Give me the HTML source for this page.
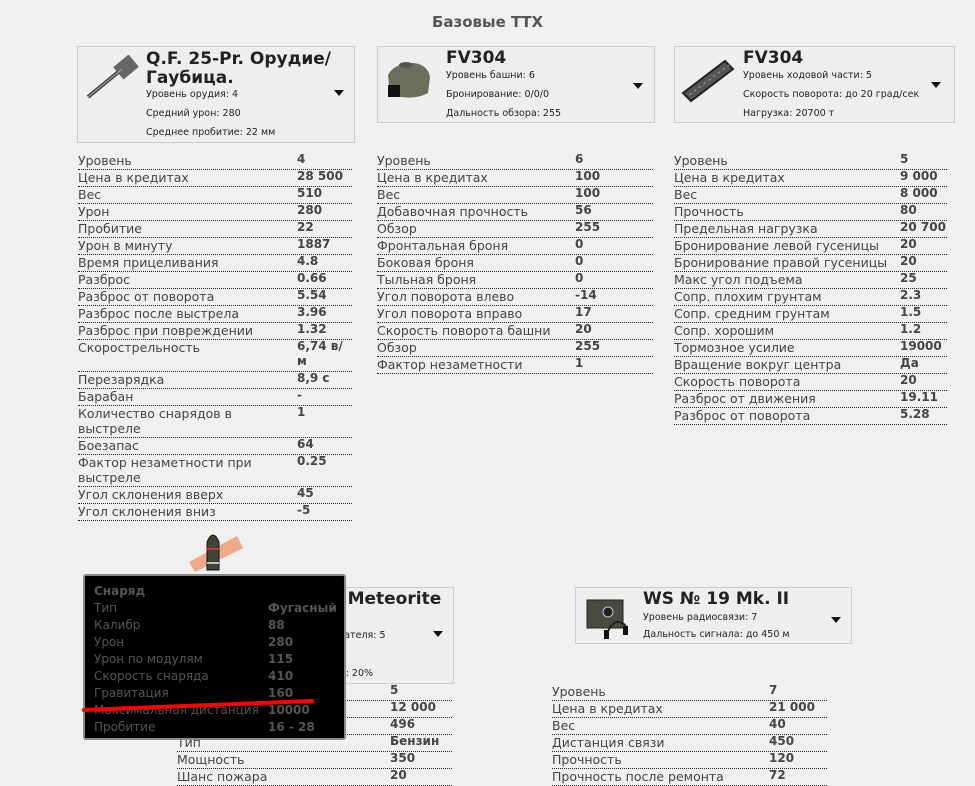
<!DOCTYPE html>
<html><head><meta charset="utf-8">
<style>
body{margin:0;width:975px;height:777px;background:#f0f0f0;overflow:hidden;position:relative;font-family:"DejaVu Sans","Liberation Sans",sans-serif;color:#444}
.h{position:absolute;left:0;width:975px;top:13px;text-align:center;font-size:15px;font-weight:bold;color:#555}
.card{position:absolute;border:1px solid #ccc;background:#eee;box-sizing:border-box}
.card .t{position:absolute;font-weight:bold;font-size:17px;color:#222;line-height:19px}
.card .s{position:absolute;font-size:9.5px;color:#222;white-space:nowrap}
.arr{position:absolute;width:0;height:0;border-left:5px solid transparent;border-right:5px solid transparent;border-top:6px solid #111}
.tb{position:absolute}
.r{position:relative;border-bottom:1px dotted #222;font-size:12.5px;line-height:15px;padding:1px 0 0 0;height:15px}
.r.d{height:30px}
.r .l{position:absolute;left:0;top:0px;line-height:15px}
.r .v{position:absolute;top:-1px;font-weight:bold;font-size:12px;color:#444}
.tip{position:absolute;left:83px;top:574px;width:263px;height:166px;background:#000;border:2px solid #888;box-sizing:border-box;border-radius:3px;font-size:12px;color:#555}
.tip div{position:absolute;left:9px;white-space:nowrap}
.tip span{position:absolute;left:174px;font-weight:bold}
</style></head><body>
<div class="h">Базовые ТТХ</div>

<div class="card" style="left:77px;top:46px;width:278px;height:97px">
 <svg style="position:absolute;left:4px;top:8px" width="60" height="50"><path d="M6 42 L40 14" stroke="#444" stroke-width="4"/><rect x="34" y="4" width="20" height="16" fill="#666" transform="rotate(-40 44 12)"/><path d="M6 42 L40 14" stroke="#aaa" stroke-width="1"/></svg>
 <div class="t" style="left:68px;top:3px">Q.F. 25-Pr. Орудие/<br>Гаубица.</div>
 <div class="s" style="left:68px;top:42px">Уровень орудия: 4</div>
 <div class="s" style="left:68px;top:61px">Средний урон: 280</div>
 <div class="s" style="left:68px;top:80px">Среднее пробитие: 22 мм</div>
 <div class="arr" style="left:256px;top:43px"></div>
</div>
<div class="card" style="left:377px;top:46px;width:278px;height:77px">
 <svg style="position:absolute;left:6px;top:8px" width="50" height="48"><path d="M6 40 L4 20 Q10 8 30 8 Q44 10 46 22 L44 38 Q30 46 6 40Z" fill="#6b6e5a"/><rect x="4" y="30" width="12" height="12" fill="#111"/><ellipse cx="22" cy="10" rx="7" ry="3" fill="#555"/></svg>
 <div class="t" style="left:68px;top:2px">FV304</div>
 <div class="s" style="left:68px;top:23px">Уровень башни: 6</div>
 <div class="s" style="left:68px;top:42px">Бронирование: 0/0/0</div>
 <div class="s" style="left:68px;top:61px">Дальность обзора: 255</div>
 <div class="arr" style="left:255px;top:36px"></div>
</div>
<div class="card" style="left:674px;top:46px;width:281px;height:77px">
 <svg style="position:absolute;left:4px;top:8px" width="60" height="50"><path d="M4 38 L46 6 L54 14 L12 46Z" fill="#555" stroke="#222" stroke-width="2"/><path d="M10 40 L50 10" stroke="#999" stroke-width="1" stroke-dasharray="3 3"/></svg>
 <div class="t" style="left:68px;top:2px">FV304</div>
 <div class="s" style="left:68px;top:23px">Уровень ходовой части: 5</div>
 <div class="s" style="left:68px;top:42px">Скорость поворота: до 20 град/сек</div>
 <div class="s" style="left:68px;top:61px">Нагрузка: 20700 т</div>
 <div class="arr" style="left:256px;top:35px"></div>
</div>

<div class="tb" style="left:78px;top:153px;width:274px">
<div class="r"><span class="l">Уровень</span><span class="v" style="left:219px">4</span></div>
<div class="r"><span class="l">Цена в кредитах</span><span class="v" style="left:219px">28 500</span></div>
<div class="r"><span class="l">Вес</span><span class="v" style="left:219px">510</span></div>
<div class="r"><span class="l">Урон</span><span class="v" style="left:219px">280</span></div>
<div class="r"><span class="l">Пробитие</span><span class="v" style="left:219px">22</span></div>
<div class="r"><span class="l">Урон в минуту</span><span class="v" style="left:219px">1887</span></div>
<div class="r"><span class="l">Время прицеливания</span><span class="v" style="left:219px">4.8</span></div>
<div class="r"><span class="l">Разброс</span><span class="v" style="left:219px">0.66</span></div>
<div class="r"><span class="l">Разброс от поворота</span><span class="v" style="left:219px">5.54</span></div>
<div class="r"><span class="l">Разброс после выстрела</span><span class="v" style="left:219px">3.96</span></div>
<div class="r"><span class="l">Разброс при повреждении</span><span class="v" style="left:219px">1.32</span></div>
<div class="r d"><span class="l">Скорострельность</span><span class="v" style="left:219px;line-height:15px">6,74 в/<br>м</span></div>
<div class="r"><span class="l">Перезарядка</span><span class="v" style="left:219px">8,9 с</span></div>
<div class="r"><span class="l">Барабан</span><span class="v" style="left:219px">-</span></div>
<div class="r d"><span class="l">Количество снарядов в<br>выстреле</span><span class="v" style="left:219px">1</span></div>
<div class="r"><span class="l">Боезапас</span><span class="v" style="left:219px">64</span></div>
<div class="r d"><span class="l">Фактор незаметности при<br>выстреле</span><span class="v" style="left:219px">0.25</span></div>
<div class="r"><span class="l">Угол склонения вверх</span><span class="v" style="left:219px">45</span></div>
<div class="r"><span class="l">Угол склонения вниз</span><span class="v" style="left:219px">-5</span></div>
</div>

<div class="tb" style="left:377px;top:153px;width:276px">
<div class="r"><span class="l">Уровень</span><span class="v" style="left:198px">6</span></div>
<div class="r"><span class="l">Цена в кредитах</span><span class="v" style="left:198px">100</span></div>
<div class="r"><span class="l">Вес</span><span class="v" style="left:198px">100</span></div>
<div class="r"><span class="l">Добавочная прочность</span><span class="v" style="left:198px">56</span></div>
<div class="r"><span class="l">Обзор</span><span class="v" style="left:198px">255</span></div>
<div class="r"><span class="l">Фронтальная броня</span><span class="v" style="left:198px">0</span></div>
<div class="r"><span class="l">Боковая броня</span><span class="v" style="left:198px">0</span></div>
<div class="r"><span class="l">Тыльная броня</span><span class="v" style="left:198px">0</span></div>
<div class="r"><span class="l">Угол поворота влево</span><span class="v" style="left:198px">-14</span></div>
<div class="r"><span class="l">Угол поворота вправо</span><span class="v" style="left:198px">17</span></div>
<div class="r"><span class="l">Скорость поворота башни</span><span class="v" style="left:198px">20</span></div>
<div class="r"><span class="l">Обзор</span><span class="v" style="left:198px">255</span></div>
<div class="r"><span class="l">Фактор незаметности</span><span class="v" style="left:198px">1</span></div>
</div>

<div class="tb" style="left:674px;top:153px;width:273px">
<div class="r"><span class="l">Уровень</span><span class="v" style="left:226px">5</span></div>
<div class="r"><span class="l">Цена в кредитах</span><span class="v" style="left:226px">9 000</span></div>
<div class="r"><span class="l">Вес</span><span class="v" style="left:226px">8 000</span></div>
<div class="r"><span class="l">Прочность</span><span class="v" style="left:226px">80</span></div>
<div class="r"><span class="l">Предельная нагрузка</span><span class="v" style="left:226px">20 700</span></div>
<div class="r"><span class="l">Бронирование левой гусеницы</span><span class="v" style="left:226px">20</span></div>
<div class="r"><span class="l">Бронирование правой гусеницы</span><span class="v" style="left:226px">20</span></div>
<div class="r"><span class="l">Макс угол подъема</span><span class="v" style="left:226px">25</span></div>
<div class="r"><span class="l">Сопр. плохим грунтам</span><span class="v" style="left:226px">2.3</span></div>
<div class="r"><span class="l">Сопр. средним грунтам</span><span class="v" style="left:226px">1.5</span></div>
<div class="r"><span class="l">Сопр. хорошим</span><span class="v" style="left:226px">1.2</span></div>
<div class="r"><span class="l">Тормозное усилие</span><span class="v" style="left:226px">19000</span></div>
<div class="r"><span class="l">Вращение вокруг центра</span><span class="v" style="left:226px">Да</span></div>
<div class="r"><span class="l">Скорость поворота</span><span class="v" style="left:226px">20</span></div>
<div class="r"><span class="l">Разброс от движения</span><span class="v" style="left:226px">19.11</span></div>
<div class="r"><span class="l">Разброс от поворота</span><span class="v" style="left:226px">5.28</span></div>
</div>

<div class="card" style="left:176px;top:587px;width:278px;height:97px">
 <div class="t" style="left:103px;top:2px">Dodge Meteorite</div>
 <div class="s" style="left:100px;top:42px">Уровень двигателя: 5</div>
 <div class="s" style="left:100px;top:80px">Шанс пожара: 20%</div>
 <div class="arr" style="left:256px;top:43px"></div>
</div>
<div class="tb" style="left:177px;top:684px;width:275px">
<div class="r"><span class="l">Уровень</span><span class="v" style="left:213px">5</span></div>
<div class="r"><span class="l">Цена в кредитах</span><span class="v" style="left:213px">12 000</span></div>
<div class="r"><span class="l">Вес</span><span class="v" style="left:213px">496</span></div>
<div class="r"><span class="l">Тип</span><span class="v" style="left:213px">Бензин</span></div>
<div class="r"><span class="l">Мощность</span><span class="v" style="left:213px">350</span></div>
<div class="r"><span class="l">Шанс пожара</span><span class="v" style="left:213px">20</span></div>
</div>

<div class="card" style="left:575px;top:587px;width:277px;height:57px">
 <svg style="position:absolute;left:8px;top:8px" width="50" height="45"><rect x="3" y="4" width="36" height="28" fill="#4a4a42" stroke="#222"/><circle cx="24" cy="16" r="5" fill="#222" stroke="#ccc"/><path d="M22 40 Q30 18 42 30" stroke="#222" stroke-width="2" fill="none"/><rect x="20" y="34" width="5" height="9" fill="#111"/><rect x="39" y="30" width="5" height="9" fill="#111"/></svg>
 <div class="t" style="left:67px;top:2px">WS № 19 Mk. II</div>
 <div class="s" style="left:67px;top:24px">Уровень радиосвязи: 7</div>
 <div class="s" style="left:67px;top:41px">Дальность сигнала: до 450 м</div>
 <div class="arr" style="left:255px;top:29px"></div>
</div>
<div class="tb" style="left:552px;top:684px;width:275px">
<div class="r"><span class="l">Уровень</span><span class="v" style="left:217px">7</span></div>
<div class="r"><span class="l">Цена в кредитах</span><span class="v" style="left:217px">21 000</span></div>
<div class="r"><span class="l">Вес</span><span class="v" style="left:217px">40</span></div>
<div class="r"><span class="l">Дистанция связи</span><span class="v" style="left:217px">450</span></div>
<div class="r"><span class="l">Прочность</span><span class="v" style="left:217px">120</span></div>
<div class="r"><span class="l">Прочность после ремонта</span><span class="v" style="left:217px">72</span></div>
</div>

<svg style="position:absolute;left:185px;top:528px" width="60" height="46">
 <path d="M4 34 L52 8 L58 20 L10 44Z" fill="#f07a40" opacity="0.6"/>
 <path d="M22 42 L22 14 Q28 0 34 14 L34 42Z" fill="#3e4438" stroke="#111"/>
 <rect x="22" y="20" width="12" height="2" fill="#c33"/>
 <rect x="22" y="34" width="12" height="2" fill="#bbb"/>
</svg>
<div class="tip">
 <div style="top:8px;font-weight:bold">Снаряд</div>
 <div style="top:25px;width:250px">Тип<span style="font-weight:bold">Фугасный</span></div>
 <div style="top:42px;width:250px">Калибр<span>88</span></div>
 <div style="top:59px;width:250px">Урон<span>280</span></div>
 <div style="top:76px;width:250px">Урон по модулям<span>115</span></div>
 <div style="top:93px;width:250px">Скорость снаряда<span>410</span></div>
 <div style="top:110px;width:250px">Гравитация<span>160</span></div>
 <div style="top:127px;width:250px">Максимальная дистанция<span>10000</span></div>
 <div style="top:144px;width:250px">Пробитие<span>16 - 28</span></div>
</div>
<svg style="position:absolute;left:80px;top:695px" width="240" height="20"><path d="M4 15 L232 6" stroke="#f00" stroke-width="4" stroke-linecap="round"/></svg>
</body></html>
